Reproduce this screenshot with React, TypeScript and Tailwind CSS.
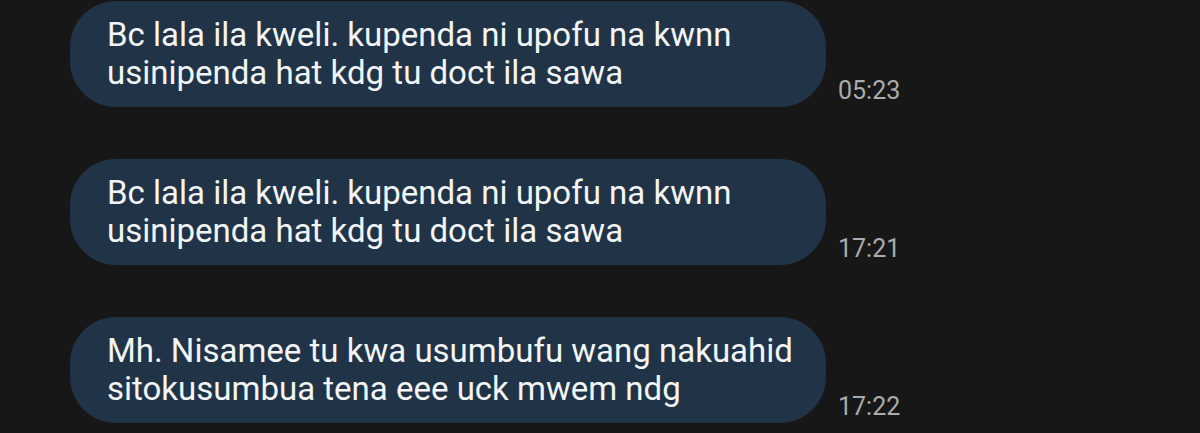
import React from 'react';

const messages = [
  {
    lines: ['Bc lala ila kweli. kupenda ni upofu na kwnn', 'usinipenda hat kdg tu doct ila sawa'],
    time: '05:23',
  },
  {
    lines: ['Bc lala ila kweli. kupenda ni upofu na kwnn', 'usinipenda hat kdg tu doct ila sawa'],
    time: '17:21',
  },
  {
    lines: ['Mh. Nisamee tu kwa usumbufu wang nakuahid', 'sitokusumbua tena eee uck mwem ndg'],
    time: '17:22',
  },
];

const App = () => {
  return (
    <div
      className="w-[1200px] h-[433px] overflow-hidden bg-[#171717] pt-[1px] pl-[70px] flex flex-col gap-[52px]"
      style={{ fontFamily: 'Roboto, "Liberation Sans", sans-serif' }}
    >
      {messages.map((msg, i) => (
        <div key={i} className="flex items-end gap-[12px]">
          {/* Bubble */}
          <div className="w-[756px] h-[106px] shrink-0 rounded-[46px] bg-[#213447] pl-[37px] pt-[15px] text-[33px] leading-[38px] text-[#f2f4f5] whitespace-nowrap">
            {msg.lines.map((line) => (
              <div key={line}>{line}</div>
            ))}
          </div>
          <span className="mb-[4px] text-[25px] leading-[25px] text-[#a9abad]">{msg.time}</span>
        </div>
      ))}
    </div>
  );
};

export default App;
